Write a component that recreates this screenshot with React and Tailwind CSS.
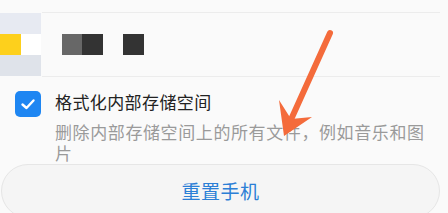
import React from "react";

export default function App() {
  return (
    <div
      className="relative w-[448px] h-[213px] overflow-hidden bg-[#fafafa]"
      style={{ fontFamily: '"Noto Sans CJK SC", "Noto Sans", sans-serif' }}
    >
      {/* top file row */}
      <div className="flex mt-[12px] h-[65px]">
        <div className="w-[41px] pt-[1px]">
          <div className="flex flex-col w-[41px] h-[63px]">
            <div className="h-[21px] bg-[#e7eaf2]" />
            <div className="flex h-[21px]">
              <div className="w-[21px] bg-[#fdd01c]" />
              <div className="flex-1 bg-white" />
            </div>
            <div className="flex-1 bg-[#dfe3ea]" />
          </div>
        </div>
        <div className="flex-1 mr-[8px] ml-[1px] border-y border-[#ececec] flex items-center pl-[20px]">
          <div className="w-[20px] h-[21px] bg-[#676767]" />
          <div className="w-[21px] h-[21px] bg-[#333333]" />
          <div className="w-[21px] h-[21px] bg-[#333333] ml-[20px]" />
        </div>
      </div>

      {/* format option */}
      <div className="flex mt-[14px] pl-[15px] mr-[20px]">
        <div className="w-[26px] h-[26px] rounded-[5px] bg-[#1e86f2] flex items-center justify-center shrink-0">
          <svg width="26" height="26" viewBox="0 0 26 26">
            <polyline
              points="7.5,13.5 11.5,17 18.5,9.5"
              fill="none"
              stroke="white"
              strokeWidth="2.4"
              strokeLinecap="round"
              strokeLinejoin="round"
            />
          </svg>
        </div>
        <div className="ml-[14px] flex-1">
          <div className="text-[17px] leading-[22px] tracking-[0.4px] text-[#222222]">
            格式化内部存储空间
          </div>
          <div className="mt-[8px] text-[17px] leading-[21px] tracking-[0.6px] text-[#9a9a9a]">
            删除内部存储空间上的所有文件，例如音乐和图片
          </div>
        </div>
      </div>

      {/* reset button */}
      <div className="mt-[1px] ml-[1px] mr-[8px] h-[54px] rounded-full border border-[#e6e6e6] bg-[#f5f5f5] flex items-center justify-center">
        <span className="text-[19px] text-[#2b7fd6] tracking-[0.5px]">重置手机</span>
      </div>

      {/* annotation arrow */}
      <svg className="absolute left-0 top-0" width="448" height="213" viewBox="0 0 448 213">
        <line x1="330" y1="33" x2="289" y2="124" stroke="#f46b3b" strokeWidth="6" strokeLinecap="round" />
        <polygon points="279,100 284,136 312,117 291,119" fill="#f46b3b" />
      </svg>
    </div>
  );
}
